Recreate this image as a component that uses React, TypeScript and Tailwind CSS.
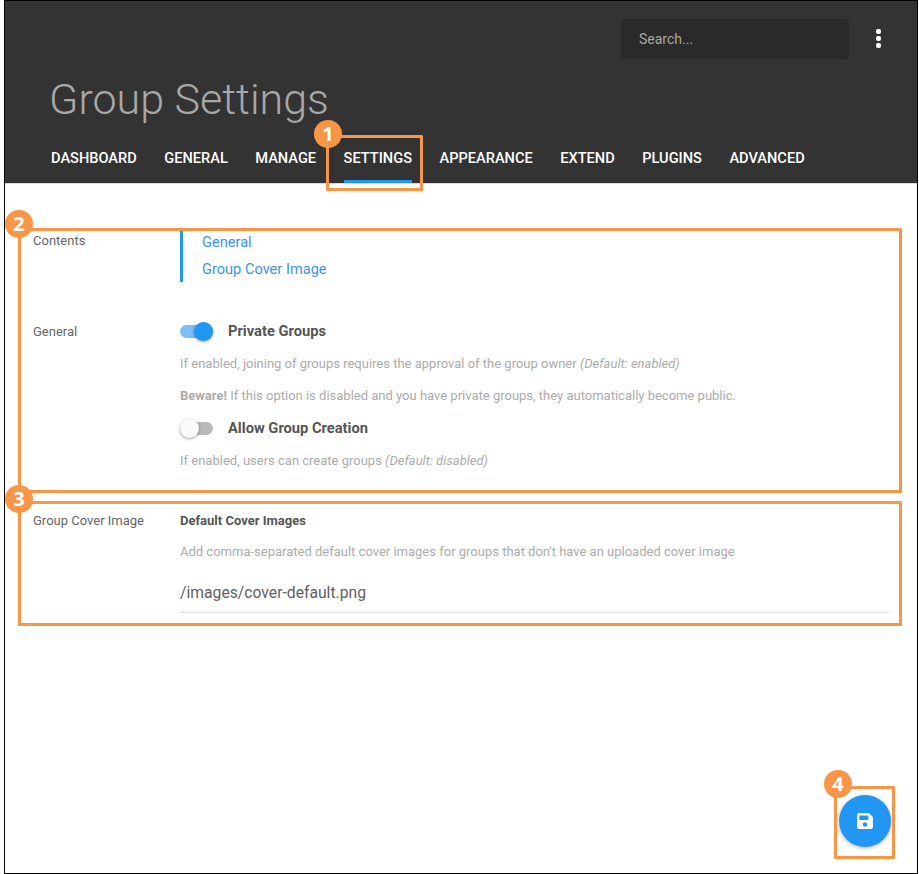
import { FaSave } from "react-icons/fa";

const tabs = ["DASHBOARD", "GENERAL", "MANAGE", "SETTINGS", "APPEARANCE", "EXTEND", "PLUGINS", "ADVANCED"];

function Toggle({ on }: { on: boolean }) {
  return (
    <div className="relative w-[33px] h-[19px] shrink-0">
      <div className={`absolute left-0 top-[3px] w-[33px] h-[13px] rounded-full ${on ? "bg-[#7dbdf8]" : "bg-[#b9b9b9]"}`} />
      <div
        className={`absolute top-0 w-[19px] h-[19px] rounded-full shadow-[0_1px_3px_rgba(0,0,0,0.4)] ${on ? "right-0 bg-[#2196f3]" : "left-0 bg-[#fafafa]"}`}
      />
    </div>
  );
}

function Marker({ n, className }: { n: number; className: string }) {
  return (
    <div
      className={`absolute w-[28px] h-[28px] rounded-full bg-[#f79646] text-white flex items-center justify-center text-[20px] font-bold font-['Open_Sans',sans-serif] ${className}`}
    >
      {n}
    </div>
  );
}

function Help({ children }: { children: React.ReactNode }) {
  return <p className="text-[13px] leading-[18px] text-[#acacac]">{children}</p>;
}

export default function App() {
  return (
    <div className="relative w-[919px] h-[874px] bg-white font-['Roboto',sans-serif] overflow-hidden">
      <div className="ml-[4px] mr-[1px] h-[874px] border border-black flex flex-col">
        <header className="h-[183px] shrink-0 bg-[#333333] border-b border-[#d8d8d8] flex flex-col">
          <div className="flex justify-end pt-[18px] pr-[36px]">
            <div className="w-[228px] h-[40px] bg-[#2a2a2a] rounded-[3px] pl-[18px] flex items-center text-[14px] text-[#a8a8a8]">
              Search...
            </div>
            <div className="ml-[27px] mt-[10px] flex flex-col gap-[2px]">
              <span className="w-[5px] h-[5px] rounded-[2px] bg-white" />
              <span className="w-[5px] h-[5px] rounded-[2px] bg-white" />
              <span className="w-[5px] h-[5px] rounded-[2px] bg-white" />
            </div>
          </div>
          <h1 className="pl-[44px] mt-[17px] text-[43px] leading-[46px] font-light text-[#a8a8a8]">Group Settings</h1>
          <nav className="mt-auto pl-[46px] flex gap-[27.5px]">
            {tabs.map((t) => (
              <div
                key={t}
                className={`h-[47px] pt-[12px] text-[14.6px] leading-[20px] font-medium text-white border-b-[3px] ${t === "SETTINGS" ? "border-[#2196f3]" : "border-transparent"}`}
              >
                {t}
              </div>
            ))}
          </nav>
        </header>

        <main className="flex-1 text-[#616161]">
          <section className="flex pl-[28px] pt-[46px]">
            <div className="w-[147px] text-[13px] leading-[20px] text-[#666666] shrink-0 pt-[1px]">Contents</div>
            <div className="border-l-[3px] border-[#2196f3] pl-[19px] h-[52px] text-[14.6px] text-[#3b94ec] leading-[27px]">
              <div className="-mt-px flex flex-col">
                <span>General</span>
                <span>Group Cover Image</span>
              </div>
            </div>
          </section>

          <section className="flex pl-[28px] pt-[39px]">
            <div className="w-[147px] text-[13px] leading-[20px] text-[#666666] shrink-0 pt-[1px]">General</div>
            <div className="flex flex-col">
              <div className="flex items-center gap-[15px] h-[20px]">
                <Toggle on />
                <span className="text-[14.7px] font-bold text-[#555555] pt-px">Private Groups</span>
              </div>
              <div className="mt-[14px]">
                <Help>
                  If enabled, joining of groups requires the approval of the group owner <em>(Default: enabled)</em>
                </Help>
              </div>
              <div className="mt-[14px]">
                <Help>
                  <strong>Beware!</strong> If this option is disabled and you have private groups, they automatically become public.
                </Help>
              </div>
              <div className="flex items-center gap-[15px] h-[20px] mt-[13px]">
                <Toggle on={false} />
                <span className="text-[14.7px] font-bold text-[#555555]">Allow Group Creation</span>
              </div>
              <div className="mt-[14px]">
                <Help>
                  If enabled, users can create groups <em>(Default: disabled)</em>
                </Help>
              </div>
            </div>
          </section>

          <section className="flex pl-[28px] pt-[41px]">
            <div className="w-[147px] text-[13px] leading-[20px] text-[#666666] shrink-0">Group Cover Image</div>
            <div className="flex-1 mr-[28px]">
              <div className="text-[13px] leading-[20px] font-bold text-[#555555]">Default Cover Images</div>
              <div className="mt-[12px]">
                <Help>Add comma-separated default cover images for groups that don't have an uploaded cover image</Help>
              </div>
              <div className="mt-[12px] h-[40px] border-b border-[#e2e2e2] text-[15.7px] leading-[40px] text-[#616161]">
                /images/cover-default.png
              </div>
            </div>
          </section>
        </main>
      </div>

      <div className="absolute left-[839px] top-[795px] w-[52px] h-[52px] rounded-full bg-[#2196f3] shadow-[0_1px_4px_rgba(0,0,0,0.3)] flex items-center justify-center text-white">
        <FaSave size={18} />
      </div>

      {/* callout boxes sit over the page */}
      <div className="absolute left-[326px] top-[135px] w-[97px] h-[56px] border-[3px] border-[#f79646] rounded-[1px]" />
      <div className="absolute left-[18px] top-[228px] w-[884px] h-[265px] border-[3px] border-[#f79646] rounded-[1px]" />
      <div className="absolute left-[18px] top-[501px] w-[884px] h-[125px] border-[3px] border-[#f79646] rounded-[1px]" />
      <div className="absolute left-[834px] top-[786px] w-[61px] h-[73px] border-[3px] border-[#f79646] rounded-[1px]" />
      <Marker n={1} className="left-[314px] top-[120px]" />
      <Marker n={2} className="left-[5px] top-[210px]" />
      <Marker n={3} className="left-[5px] top-[485px]" />
      <Marker n={4} className="left-[824px] top-[770px]" />
    </div>
  );
}
